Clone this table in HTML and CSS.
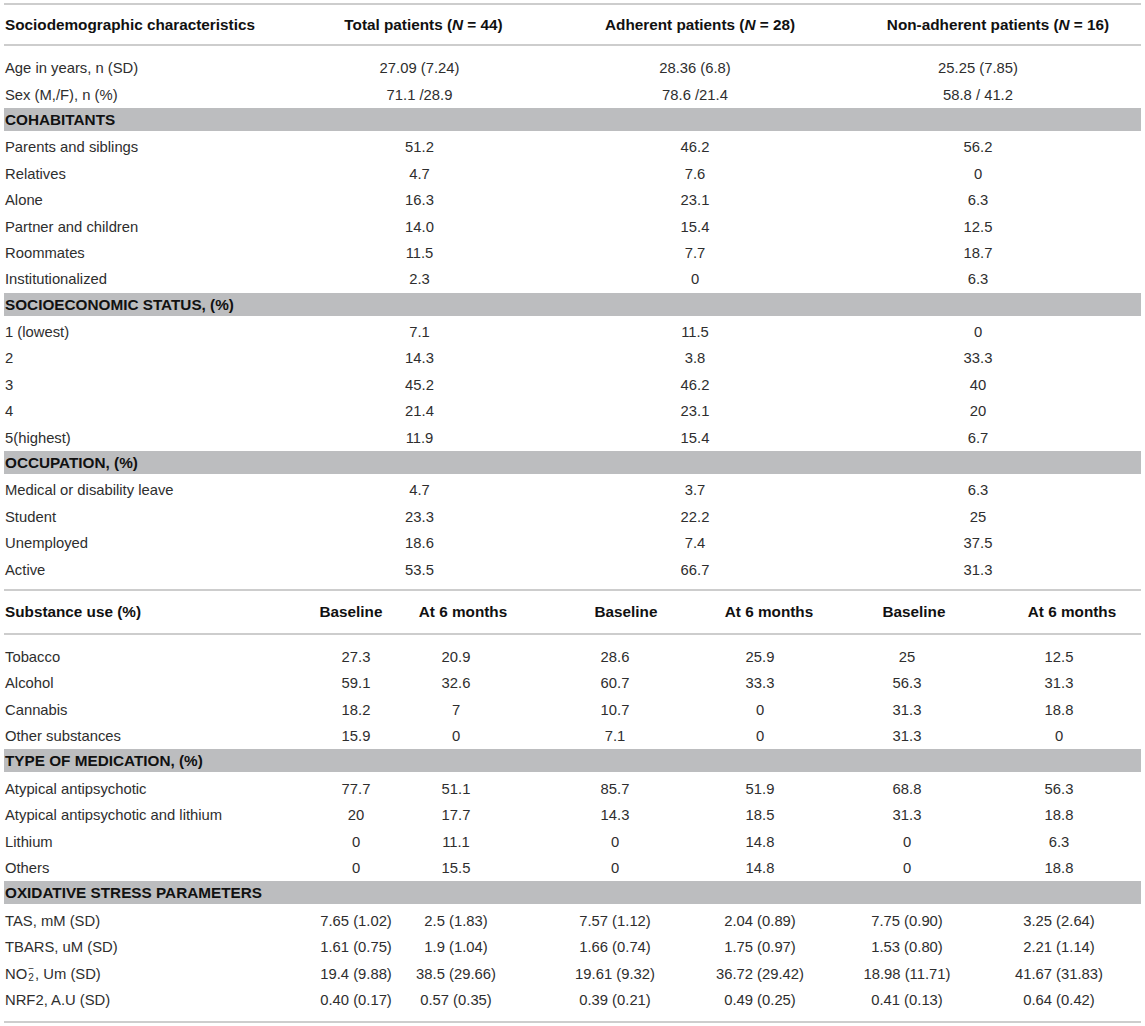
FILE: index.html
```html
<!DOCTYPE html>
<html lang="en">
<head>
<meta charset="utf-8">
<title>Sociodemographic characteristics</title>
<link rel="stylesheet" href="styles.css">
</head>
<body>
<div class="page">
  <section class="tbl t1">
    <div class="hdr">
      <div class="lab">Sociodemographic characteristics</div>
      <div class="c c1">Total patients (<i>N</i> = 44)</div>
      <div class="c c2">Adherent patients (<i>N</i> = 28)</div>
      <div class="c c3">Non-adherent patients (<i>N</i> = 16)</div>
    </div>
    <div class="body">
      <div class="row"><div class="lab">Age in years, n (SD)</div><div class="c c1">27.09 (7.24)</div><div class="c c2">28.36 (6.8)</div><div class="c c3">25.25 (7.85)</div></div>
      <div class="row"><div class="lab">Sex (M,/F), n (%)</div><div class="c c1">71.1 /28.9</div><div class="c c2">78.6 /21.4</div><div class="c c3">58.8 / 41.2</div></div>
      <div class="band">COHABITANTS</div>
      <div class="row"><div class="lab">Parents and siblings</div><div class="c c1">51.2</div><div class="c c2">46.2</div><div class="c c3">56.2</div></div>
      <div class="row"><div class="lab">Relatives</div><div class="c c1">4.7</div><div class="c c2">7.6</div><div class="c c3">0</div></div>
      <div class="row"><div class="lab">Alone</div><div class="c c1">16.3</div><div class="c c2">23.1</div><div class="c c3">6.3</div></div>
      <div class="row"><div class="lab">Partner and children</div><div class="c c1">14.0</div><div class="c c2">15.4</div><div class="c c3">12.5</div></div>
      <div class="row"><div class="lab">Roommates</div><div class="c c1">11.5</div><div class="c c2">7.7</div><div class="c c3">18.7</div></div>
      <div class="row"><div class="lab">Institutionalized</div><div class="c c1">2.3</div><div class="c c2">0</div><div class="c c3">6.3</div></div>
      <div class="band">SOCIOECONOMIC STATUS, (%)</div>
      <div class="row"><div class="lab">1 (lowest)</div><div class="c c1">7.1</div><div class="c c2">11.5</div><div class="c c3">0</div></div>
      <div class="row"><div class="lab">2</div><div class="c c1">14.3</div><div class="c c2">3.8</div><div class="c c3">33.3</div></div>
      <div class="row"><div class="lab">3</div><div class="c c1">45.2</div><div class="c c2">46.2</div><div class="c c3">40</div></div>
      <div class="row"><div class="lab">4</div><div class="c c1">21.4</div><div class="c c2">23.1</div><div class="c c3">20</div></div>
      <div class="row"><div class="lab">5(highest)</div><div class="c c1">11.9</div><div class="c c2">15.4</div><div class="c c3">6.7</div></div>
      <div class="band">OCCUPATION, (%)</div>
      <div class="row"><div class="lab">Medical or disability leave</div><div class="c c1">4.7</div><div class="c c2">3.7</div><div class="c c3">6.3</div></div>
      <div class="row"><div class="lab">Student</div><div class="c c1">23.3</div><div class="c c2">22.2</div><div class="c c3">25</div></div>
      <div class="row"><div class="lab">Unemployed</div><div class="c c1">18.6</div><div class="c c2">7.4</div><div class="c c3">37.5</div></div>
      <div class="row"><div class="lab">Active</div><div class="c c1">53.5</div><div class="c c2">66.7</div><div class="c c3">31.3</div></div>
    </div>
  </section>

  <section class="tbl t2">
    <div class="hdr">
      <div class="lab">Substance use (%)</div>
      <div class="c c1">Baseline</div>
      <div class="c c2">At 6 months</div>
      <div class="c c3">Baseline</div>
      <div class="c c4">At 6 months</div>
      <div class="c c5">Baseline</div>
      <div class="c c6">At 6 months</div>
    </div>
    <div class="body">
      <div class="row"><div class="lab">Tobacco</div><div class="c">27.3</div><div class="c">20.9</div><div class="c">28.6</div><div class="c">25.9</div><div class="c">25</div><div class="c">12.5</div></div>
      <div class="row"><div class="lab">Alcohol</div><div class="c">59.1</div><div class="c">32.6</div><div class="c">60.7</div><div class="c">33.3</div><div class="c">56.3</div><div class="c">31.3</div></div>
      <div class="row"><div class="lab">Cannabis</div><div class="c">18.2</div><div class="c">7</div><div class="c">10.7</div><div class="c">0</div><div class="c">31.3</div><div class="c">18.8</div></div>
      <div class="row"><div class="lab">Other substances</div><div class="c">15.9</div><div class="c">0</div><div class="c">7.1</div><div class="c">0</div><div class="c">31.3</div><div class="c">0</div></div>
      <div class="band">TYPE OF MEDICATION, (%)</div>
      <div class="row"><div class="lab">Atypical antipsychotic</div><div class="c">77.7</div><div class="c">51.1</div><div class="c">85.7</div><div class="c">51.9</div><div class="c">68.8</div><div class="c">56.3</div></div>
      <div class="row"><div class="lab">Atypical antipsychotic and lithium</div><div class="c">20</div><div class="c">17.7</div><div class="c">14.3</div><div class="c">18.5</div><div class="c">31.3</div><div class="c">18.8</div></div>
      <div class="row"><div class="lab">Lithium</div><div class="c">0</div><div class="c">11.1</div><div class="c">0</div><div class="c">14.8</div><div class="c">0</div><div class="c">6.3</div></div>
      <div class="row"><div class="lab">Others</div><div class="c">0</div><div class="c">15.5</div><div class="c">0</div><div class="c">14.8</div><div class="c">0</div><div class="c">18.8</div></div>
      <div class="band">OXIDATIVE STRESS PARAMETERS</div>
      <div class="row"><div class="lab">TAS, mM (SD)</div><div class="c">7.65 (1.02)</div><div class="c">2.5 (1.83)</div><div class="c">7.57 (1.12)</div><div class="c">2.04 (0.89)</div><div class="c">7.75 (0.90)</div><div class="c">3.25 (2.64)</div></div>
      <div class="row"><div class="lab">TBARS, uM (SD)</div><div class="c">1.61 (0.75)</div><div class="c">1.9 (1.04)</div><div class="c">1.66 (0.74)</div><div class="c">1.75 (0.97)</div><div class="c">1.53 (0.80)</div><div class="c">2.21 (1.14)</div></div>
      <div class="row"><div class="lab">NO<span class="ion"><span class="sup">−</span><span class="sub">2</span></span>, Um (SD)</div><div class="c">19.4 (9.88)</div><div class="c">38.5 (29.66)</div><div class="c">19.61 (9.32)</div><div class="c">36.72 (29.42)</div><div class="c">18.98 (11.71)</div><div class="c">41.67 (31.83)</div></div>
      <div class="row"><div class="lab">NRF2, A.U (SD)</div><div class="c">0.40 (0.17)</div><div class="c">0.57 (0.35)</div><div class="c">0.39 (0.21)</div><div class="c">0.49 (0.25)</div><div class="c">0.41 (0.13)</div><div class="c">0.64 (0.42)</div></div>
    </div>
  </section>
</div>
</body>
</html>
```

FILE: styles.css
```css
html, body {
  margin: 0;
  padding: 0;
  background: #ffffff;
}

body {
  font-family: "Liberation Sans", Arial, Helvetica, sans-serif;
  font-size: 14.8px;
  color: #2e2e2e;
}

.page {
  width: 1137px;
  padding: 3px 4px 0 4px;
}

.tbl {
  border-top: 2px solid #cdcdcd;
}

.t2 {
  border-bottom: 2px solid #cdcdcd;
}

.hdr,
.row {
  display: grid;
  align-items: center;
}

.t1 .hdr,
.t1 .row {
  grid-template-columns: 260px 311px 240px 326px;
}

.t2 .hdr,
.t2 .row {
  grid-template-columns: 343px 18px 182px 136px 154px 140px 164px;
}

.hdr {
  border-bottom: 2px solid #cdcdcd;
  font-weight: bold;
  font-size: 15.3px;
  color: #111111;
}

.t1 .hdr {
  height: 39px;
}

.t2 .hdr {
  height: 42px;
}

.hdr i {
  font-style: italic;
}

.body {
  padding: 9px 0 6px 0;
}

.t2 .body {
  padding: 9px 0 8px 0;
}

.row {
  height: 26.4px;
}

.lab {
  padding-left: 1px;
  white-space: nowrap;
}

.c {
  justify-self: center;
  white-space: nowrap;
}

/* header offsets relative to the data column centres */
.t1 .hdr .c1 { margin-left: 8px; }
.t1 .hdr .c2 { margin-left: 10px; }
.t1 .hdr .c3 { margin-left: 40px; }

.t2 .hdr .c1 { margin-right: 10px; }
.t2 .hdr .c2 { margin-left: 14px; }
.t2 .hdr .c3 { margin-left: 22px; }
.t2 .hdr .c4 { margin-left: 18px; }
.t2 .hdr .c5 { margin-left: 14px; }
.t2 .hdr .c6 { margin-left: 26px; }

.band {
  height: 23px;
  line-height: 23px;
  margin-bottom: 3.4px;
  background: #bcbdbf;
  font-weight: bold;
  font-size: 15.3px;
  color: #111111;
  padding-left: 1px;
}

.ion {
  display: inline-flex;
  flex-direction: column;
  align-items: center;
  vertical-align: middle;
  font-size: 10px;
  line-height: 8px;
  margin: -4px 1px 0 1px;
  position: relative;
  top: 1px;
}

.ion .sup {
  line-height: 8px;
}

.ion .sub {
  line-height: 10px;
}
```
